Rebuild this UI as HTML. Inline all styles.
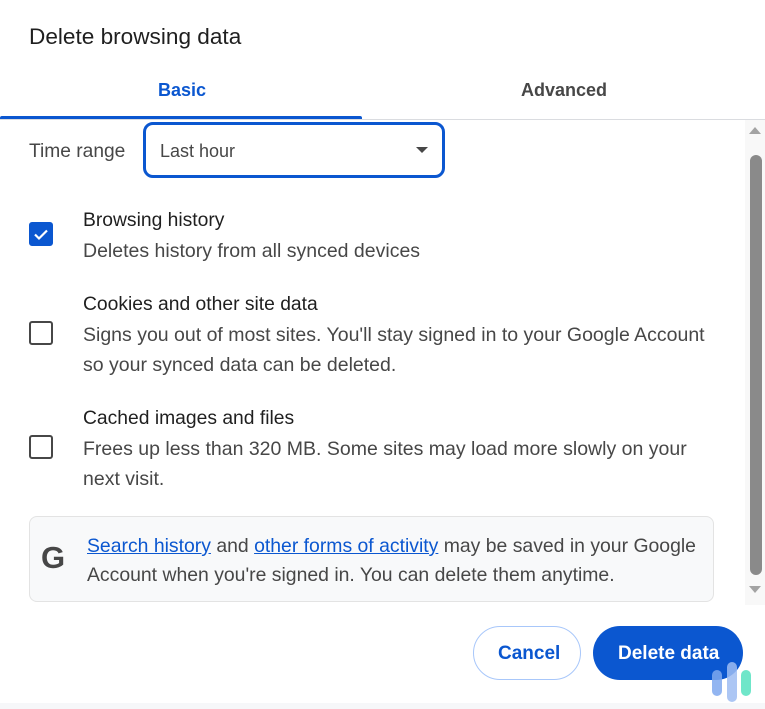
<!DOCTYPE html>
<html><head><meta charset="utf-8"><style>
*{margin:0;padding:0;box-sizing:border-box}
body{width:765px;height:709px;background:#fff;font-family:"Liberation Sans",Arial,sans-serif;position:relative;overflow:hidden;color:#1f1f1f}
.a{position:absolute;white-space:nowrap}
.t{font-size:19.5px;color:#474747}
.h{font-size:19.3px;color:#1f1f1f}
.cb{position:absolute;left:29px;width:24px;height:24px;border:2px solid #474747;border-radius:3px}
a{color:#0b57d0;text-decoration:underline}
</style></head><body>
<div class="a" style="left:29px;top:24px;font-size:22.6px;color:#1f1f1f">Delete browsing data</div>
<div class="a" style="left:158px;top:80px;font-size:18px;font-weight:bold;color:#0b57d0">Basic</div>
<div class="a" style="left:521px;top:80px;font-size:18px;font-weight:bold;color:#474747">Advanced</div>
<div class="a" style="left:0;top:116px;width:362px;height:3px;background:#0b57d0;border-radius:2px 2px 0 0"></div>
<div class="a" style="left:0;top:119px;width:765px;height:1px;background:#dadce0"></div>
<div class="a t" style="left:29px;top:141px;font-size:19.2px">Time range</div>
<div class="a" style="left:143px;top:122px;width:302px;height:56px;border:3px solid #0b57d0;border-radius:10px"></div>
<div class="a t" style="left:160px;top:141px;font-size:18px">Last hour</div>
<div class="a" style="left:416px;top:147px;width:0;height:0;border-left:6px solid transparent;border-right:6px solid transparent;border-top:6px solid #474747"></div>

<div class="cb" style="top:222px;background:#0b57d0;border-color:#0b57d0"><svg width="20" height="20" viewBox="0 0 20 20"><path d="M4 10.5l4 4 8-8" stroke="#fff" stroke-width="2.2" fill="none"/></svg></div>
<div class="a h" style="left:83px;top:210px">Browsing history</div>
<div class="a t" style="left:83px;top:240px">Deletes history from all synced devices</div>

<div class="cb" style="top:321px"></div>
<div class="a h" style="left:83px;top:294px">Cookies and other site data</div>
<div class="a t" style="left:83px;top:324px">Signs you out of most sites. You'll stay signed in to your Google Account</div>
<div class="a t" style="left:83px;top:354px">so your synced data can be deleted.</div>

<div class="cb" style="top:435px"></div>
<div class="a h" style="left:83px;top:408px">Cached images and files</div>
<div class="a t" style="left:83px;top:438px">Frees up less than 320 MB. Some sites may load more slowly on your</div>
<div class="a t" style="left:83px;top:468px">next visit.</div>

<div class="a" style="left:29px;top:516px;width:685px;height:86px;background:#f8f9fa;border:1px solid #e3e3e3;border-radius:8px"></div>
<div class="a" style="left:41px;top:540px;font-size:31px;font-weight:900;color:#474747">G</div>
<div class="a t" style="left:87px;top:535px;font-size:19.4px"><a>Search history</a> and <a>other forms of activity</a> may be saved in your Google</div>
<div class="a t" style="left:87px;top:564px;font-size:19.4px">Account when you're signed in. You can delete them anytime.</div>

<div class="a" style="left:745px;top:120px;width:20px;height:485px;background:#f8f8f8"></div>
<div class="a" style="left:749px;top:127px;border-left:6px solid transparent;border-right:6px solid transparent;border-bottom:7px solid #a3a3a3"></div>
<div class="a" style="left:750px;top:155px;width:12px;height:420px;background:#8a8a8a;border-radius:6px"></div>
<div class="a" style="left:749px;top:586px;border-left:6px solid transparent;border-right:6px solid transparent;border-top:7px solid #a3a3a3"></div>

<div class="a" style="left:473px;top:626px;width:108px;height:54px;border:1px solid #a8c7fa;border-radius:27px"></div>
<div class="a" style="left:498px;top:643px;font-size:19px;font-weight:bold;color:#0b57d0">Cancel</div>
<div class="a" style="left:593px;top:626px;width:150px;height:54px;background:#0b57d0;border-radius:27px"></div>
<div class="a" style="left:618px;top:643px;font-size:19px;font-weight:bold;color:#fff">Delete data</div>
<div class="a" style="left:712px;top:670px;width:10px;height:26px;background:#7fa8ee;border-radius:5px;opacity:.85"></div>
<div class="a" style="left:727px;top:662px;width:10px;height:40px;background:#9dbcf2;border-radius:5px;opacity:.85"></div>
<div class="a" style="left:741px;top:670px;width:10px;height:26px;background:#6fe6c9;border-radius:5px"></div>
<div class="a" style="left:0;top:703px;width:765px;height:6px;background:#f6f7f9"></div>
</body></html>
